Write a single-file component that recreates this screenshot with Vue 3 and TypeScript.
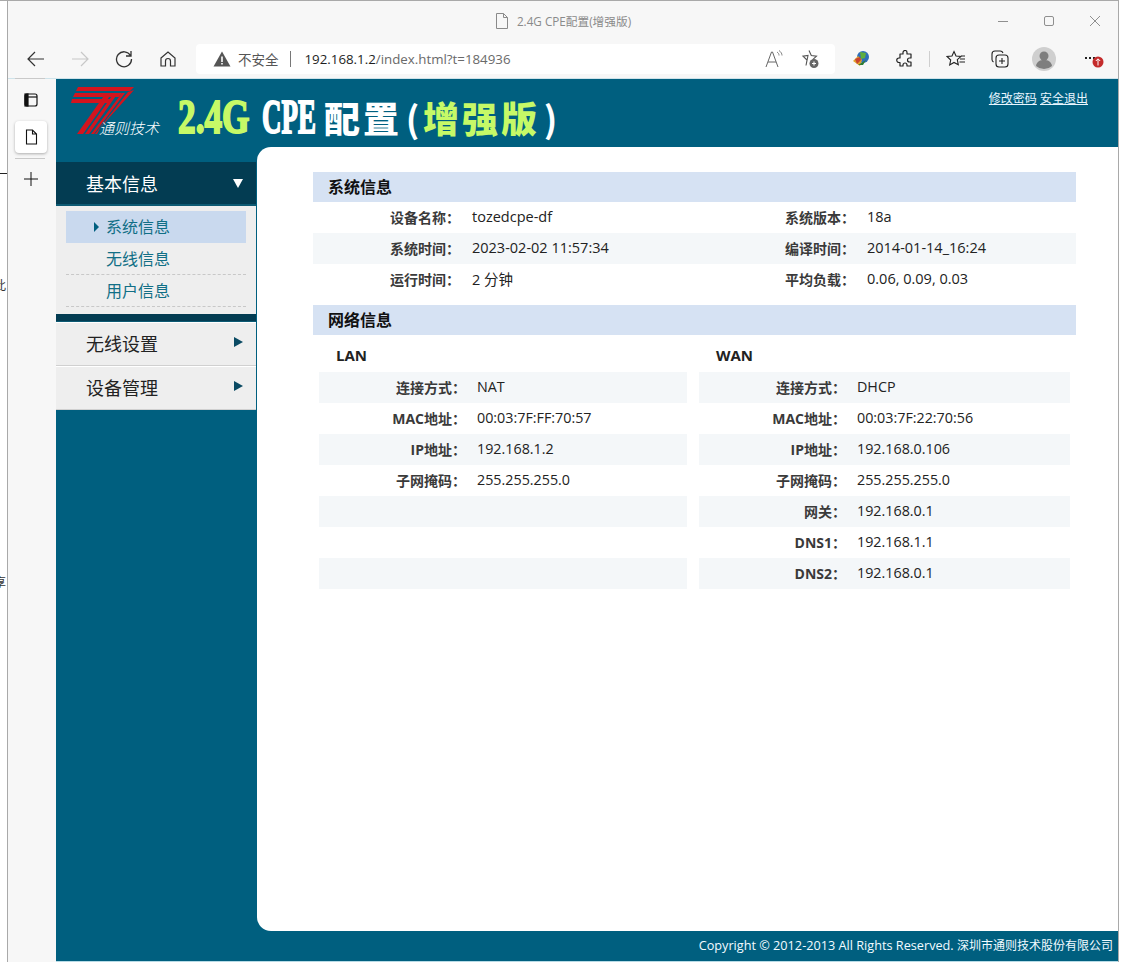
<script setup lang="ts">
interface Row { label: string; value: string; label2?: string; value2?: string }
const sysRows: Row[] = [
  { label: '设备名称：', value: 'tozedcpe-df', label2: '系统版本：', value2: '18a' },
  { label: '系统时间：', value: '2023-02-02 11:57:34', label2: '编译时间：', value2: '2014-01-14_16:24' },
  { label: '运行时间：', value: '2 分钟', label2: '平均负载：', value2: '0.06, 0.09, 0.03' },
]
const lanRows: Row[] = [
  { label: '连接方式：', value: 'NAT' },
  { label: 'MAC地址：', value: '00:03:7F:FF:70:57' },
  { label: 'IP地址：', value: '192.168.1.2' },
  { label: '子网掩码：', value: '255.255.255.0' },
  { label: '', value: '' },
  { label: '', value: '' },
  { label: '', value: '' },
]
const wanRows: Row[] = [
  { label: '连接方式：', value: 'DHCP' },
  { label: 'MAC地址：', value: '00:03:7F:22:70:56' },
  { label: 'IP地址：', value: '192.168.0.106' },
  { label: '子网掩码：', value: '255.255.255.0' },
  { label: '网关：', value: '192.168.0.1' },
  { label: 'DNS1：', value: '192.168.1.1' },
  { label: 'DNS2：', value: '192.168.0.1' },
]
</script>

<template>
  <div class="screen">
    <div class="behind">
      <i class="behind-line"></i>
      <span class="behind-a">此</span>
      <span class="behind-b">享</span>
    </div>
    <div class="window">
      <div class="titlebar">
        <div></div>
        <div class="title">
          <svg width="14" height="16" viewBox="0 0 14 16" fill="none" stroke="#8a8a8a"><path d="M1.5.5h7l4 4v11h-11zM8.5.5v4h4" /></svg>
          <span>2.4G CPE配置(增强版)</span>
        </div>
        <div class="winctl">
          <svg width="46" height="16" viewBox="0 0 46 16" stroke="#8f8f8f" fill="none"><path d="M18 8.5h10" /></svg>
          <svg width="46" height="16" viewBox="0 0 46 16" stroke="#8f8f8f" fill="none"><rect x="18.5" y="3.5" width="9" height="9" rx="1.5" /></svg>
          <svg width="46" height="16" viewBox="0 0 46 16" stroke="#8f8f8f" fill="none"><path d="M18 3l10 10M28 3L18 13" /></svg>
        </div>
      </div>
      <div class="toolbar">
        <div class="tbtn"><svg width="18" height="18" viewBox="0 0 18 18" fill="none" stroke="#333" stroke-width="1.2"><path d="M17 9H1M8 2L1 9l7 7" /></svg></div>
        <div class="tbtn"><svg width="18" height="18" viewBox="0 0 18 18" fill="none" stroke="#c8c8c8" stroke-width="1.2"><path d="M1 9h16M10 2l7 7-7 7" /></svg></div>
        <div class="tbtn"><svg width="18" height="18" viewBox="0 0 18 18" fill="none" stroke="#333" stroke-width="1.3"><path d="M15.5 5.5A7.5 7.5 0 1 0 16.5 9M16 1v5h-5" /></svg></div>
        <div class="tbtn"><svg width="18" height="18" viewBox="0 0 18 18" fill="none" stroke="#333" stroke-width="1.2"><path d="M2 8l7-6 7 6v8h-4.500v-5a2.500 2.500 0 0 0-5 0v5H2z" /></svg></div>
        <div class="address">
          <svg width="18" height="16" viewBox="0 0 18 16"><path d="M9 .5L17.500 15.500H.5z" fill="#555" /><path d="M8.200 5.500h1.600v5.500H8.200zM8.200 12h1.600v1.600H8.200z" fill="#fff" /></svg>
          <span class="insecure">不安全</span>
          <i class="addr-sep"></i>
          <span class="url"><b>192.168.1.2</b>/index.html?t=184936</span>
          <span class="addr-end">
            <svg width="20" height="20" viewBox="0 0 20 20" fill="none" stroke="#666"><path d="M2 18L7.500 3h1L14 18M4 13h8" /><path d="M13 3c1.500 1 2 2 2 3.500M15 1.500c2 1.500 3 3 3 5" stroke-width=".8" /></svg>
            <svg width="20" height="20" viewBox="0 0 20 20" fill="none" stroke="#555" stroke-width="1.1"><path d="M9 1.500l2.300 5 5.200.6-3.800 3.600M6 16.500l1-5.500-4-3.900 5-.6z" /><circle cx="14" cy="14.500" r="4.500" fill="#666" stroke="none" /><path d="M12 14.500h4M14 12.500v4" stroke="#fff" /></svg>
          </span>
        </div>
        <div class="ext">
          <div class="tbtn"><svg width="20" height="20" viewBox="0 0 20 20"><circle cx="12" cy="8" r="6" fill="#2f6fb8" /><path d="M9 3l6 1-1 5-4 1z" fill="#5fae3e" /><path d="M2 12l5-5 4 4-2 6z" fill="#e3a22c" /><path d="M4 10l5-2 1 3-4 4z" fill="#c9432f" /><path d="M7 16l8-5-3 5z" fill="#2e7d32" /></svg></div>
          <div class="tbtn"><svg width="18" height="18" viewBox="0 0 18 18" fill="none" stroke="#222" stroke-width="1.2"><path d="M7 2.500a2 2 0 0 1 4 0V4h4v4h-1.500a2 2 0 0 0 0 4H15v4h-4v-1a2 2 0 0 0-4 0v1H4v-3.500H3a2.200 2.200 0 0 1 0-4.500h1V4h3z" stroke-linejoin="round" /></svg></div>
          <i class="tsep"></i>
          <div class="tbtn"><svg width="20" height="18" viewBox="0 0 20 18" fill="none" stroke="#222" stroke-width="1.1"><path d="M8 1.500l2 4.500 5 .5-3.700 3.200 1 5L8 12.500 3.700 15l1-5L1 6.500 6 6zM14 9h5M13.500 12H19M15 6h4" /></svg></div>
          <div class="tbtn"><svg width="20" height="20" viewBox="0 0 20 20" fill="none" stroke="#222" stroke-width="1.1"><rect x="6" y="6" width="12" height="12" rx="3" /><path d="M12 9v6M9 12h6M3.500 13A3 3 0 0 1 2 10.500V5a3 3 0 0 1 3-3h5a3 3 0 0 1 3 2" /></svg></div>
          <div class="tbtn"><svg width="24" height="24" viewBox="0 0 24 24"><circle cx="12" cy="12" r="12" fill="#cfcfcf" /><circle cx="12" cy="9" r="4.500" fill="#7e7e7e" /><path d="M4 19c1-5 4-6 8-6s7 1 8 6a12 12 0 0 1-16 0z" fill="#7e7e7e" /></svg></div>
          <div class="tbtn more"><span class="dots"></span><svg class="badge" width="12" height="12" viewBox="0 0 12 12"><circle cx="6" cy="6" r="5.500" fill="#c42b2b" /><path d="M6 9.500V3M3.800 5L6 2.800 8.200 5" stroke="#fff" fill="none" /></svg></div>
        </div>
      </div>
      <div class="viewport">
        <aside class="tabs">
          <i class="tabs-line first"></i>
          <div class="tab-icon"><svg width="14" height="14" viewBox="0 0 14 14" fill="none" stroke="#111" stroke-width="1.200"><rect x="1" y="1" width="12" height="12" rx="2" /><path d="M1 4h12" /><rect x="1" y="1" width="3" height="12" fill="#111" /></svg></div>
          <div class="tab-active"><svg width="13" height="16" viewBox="0 0 13 16" fill="none" stroke="#111" stroke-width="1.100"><path d="M1.500 1h6l4 4v10h-10zM7.500 1v4h4" /></svg></div>
          <i class="tabs-line second"></i>
          <div class="tab-plus"><svg width="16" height="16" viewBox="0 0 16 16" stroke="#111"><path d="M8 1v14M1 8h14" /></svg></div>
        </aside>
        <div class="page">
          <header class="head">
            <div class="logo">
              <svg width="66" height="52" viewBox="0 0 66 52">
                <g fill="#d3141e">
                  <path d="M8 1H64L60 5H6zM5 7H52L49 11H3zM2 13H42L40 17H1z" />
                  <path d="M36 7h6L13 48H7zM44 7h4L19 48h-4zM52 7h3L24 48h-3z" />
                  <path d="M58 6l6-2L30 42l-3 6h-2z" />
                </g>
              </svg>
              <span class="logo-text">通则技术</span>
            </div>
            <div class="bigtitle">
              <span class="latin green w73"><span>2.4G</span></span>
              <span class="latin white w58"><span>CPE</span></span>
              <span class="cjk white">配置</span>
              <span class="paren white">(</span>
              <span class="cjk green">增强版</span>
              <span class="paren white">)</span>
            </div>
            <nav class="toplinks"><a>修改密码</a> <a>安全退出</a></nav>
          </header>
          <div class="body">
            <div class="menu">
              <div class="m-open"><span>基本信息</span><i class="tri-down"></i></div>
              <div class="m-sub">
                <div class="sub sel"><i class="tri-small"></i>系统信息</div>
                <div class="sub">无线信息</div>
                <div class="sub">用户信息</div>
              </div>
              <div class="m-bar"></div>
              <div class="m-item"><span>无线设置</span><i class="tri-right"></i></div>
              <div class="m-item"><span>设备管理</span><i class="tri-right"></i></div>
            </div>
            <main class="card">
              <h2 class="sec">系统信息</h2>
              <div v-for="r in sysRows" :key="r.label" class="sys-row">
                <span class="k">{{ r.label }}</span><span class="v">{{ r.value }}</span>
                <span class="k">{{ r.label2 }}</span><span class="v">{{ r.value2 }}</span>
              </div>
              <h2 class="sec sec2">网络信息</h2>
              <div class="net">
                <div class="net-col">
                  <h3>LAN</h3>
                  <div v-for="(r, i) in lanRows" :key="i" class="net-row"><span class="k">{{ r.label }}</span><span class="v nv">{{ r.value }}</span></div>
                </div>
                <div class="net-col">
                  <h3>WAN</h3>
                  <div v-for="(r, i) in wanRows" :key="i" class="net-row"><span class="k">{{ r.label }}</span><span class="v nv">{{ r.value }}</span></div>
                </div>
              </div>
            </main>
          </div>
          <footer class="foot">Copyright © 2012-2013 All Rights Reserved. <span class="foot-cn">深圳市通则技术股份有限公司</span></footer>
        </div>
      </div>
    </div>
  </div>
</template>

<style>
html, body { margin: 0; background: #fff; }
</style>

<style scoped>
* { box-sizing: border-box; }
.screen {
  width: 1126px; height: 969px; display: flex; overflow: hidden; background: #fff;
  font-family: "Open Sans", "Noto Sans CJK SC", sans-serif; color: #222;
}
.behind { width: 7px; position: relative; overflow: hidden; flex: none; border-top: 1px solid #a9a9a9; font-size: 12px; color: #333; }
.behind-line { position: absolute; left: 0; top: 172px; width: 7px; height: 1px; background: #222; }
.behind-a { position: absolute; left: -6px; top: 275px; }
.behind-b { position: absolute; left: -6px; top: 572px; }
.window { width: 1112px; height: 962px; flex: none; border: 1px solid #a9a9a9; border-bottom: 0; display: flex; flex-direction: column; background: #f7f7f7; }
.titlebar { height: 39px; display: grid; grid-template-columns: 1fr auto 1fr; align-items: center; flex: none; }
.title { display: flex; align-items: center; gap: 8px; font-size: 11.7px; color: #8a8a8a; }
.winctl { display: flex; justify-content: flex-end; align-items: center; }
.toolbar { height: 39px; display: flex; align-items: center; padding-left: 6px; flex: none; border-bottom: 1px solid #cfe3ea; }
.tbtn { width: 44px; height: 30px; display: flex; align-items: center; justify-content: center; flex: none; }
.address { width: 639px; height: 30px; margin-left: 6px; background: #fff; border-radius: 4px; display: flex; align-items: center; padding-left: 17px; font-size: 13.3px; flex: none; }
.insecure { margin-left: 7px; color: #555; font-size: 13.5px; }
.addr-sep { width: 1px; height: 16px; background: #777; margin: 0 14px 0 11px; }
.url { color: #6a6a6a; font-size: 13.3px; }
.url b { font-weight: 400; color: #1e1e1e; }
.addr-end { margin-left: auto; display: flex; gap: 16px; padding-right: 15px; align-items: center; }
.ext { display: flex; align-items: center; margin-left: 4px; }
.tsep { width: 1px; height: 16px; background: #cfcfcf; margin: 0 4px 0 2px; flex: none; }
.more { position: relative; margin-left: 2px; }
.dots { width: 2px; height: 2px; background: #222; box-shadow: -4px 0 #222, 4px 0 #222; margin-top: -3px; }
.badge { position: absolute; left: 24px; top: 12px; }
.viewport { flex: 1; display: flex; min-height: 0; }
.tabs { width: 48px; flex: none; display: flex; flex-direction: column; align-items: flex-start; padding-left: 7px; }
.tabs-line { display: block; width: 30px; height: 1px; background: #c9c9c9; flex: none; }
.tabs-line.first { margin-top: -1px; }
.tabs-line.second { margin-top: 5px; }
.tab-icon { width: 32px; height: 42px; display: flex; align-items: center; justify-content: center; flex: none; }
.tab-active { width: 32px; height: 32px; background: #fff; border-radius: 4px; box-shadow: 0 1px 3px rgba(0,0,0,.3); display: flex; align-items: center; justify-content: center; flex: none; }
.tab-plus { width: 32px; height: 40px; display: flex; align-items: center; justify-content: center; flex: none; }
.page { flex: 1; display: flex; flex-direction: column; background: #005f7f; min-width: 0; }
.head { height: 68px; display: flex; flex: none; align-items: flex-start; }
.logo { width: 110px; height: 68px; position: relative; margin-left: 12px; flex: none; }
.logo svg { position: absolute; left: 2px; top: 7px; }
.logo-text { position: absolute; left: 31px; top: 38px; color: #fff; font-size: 15px; font-style: italic; font-weight: 300; white-space: nowrap; }
.bigtitle { display: flex; align-items: center; height: 76px; flex: none; }
.latin { display: inline-block; font-family: "Liberation Serif", serif; font-weight: 700; font-size: 49px; line-height: 76px; white-space: nowrap; -webkit-text-stroke: 2px currentColor; }
.latin span { display: inline-block; transform-origin: 0 50%; }
.w73 { width: 84px; }
.w73 span { transform: scaleX(.72); }
.w58 { width: 62px; }
.w58 span { transform: scaleX(.55); }
.green { color: #c6f967; }
.white { color: #fff; }
.cjk { font-family: "Noto Sans CJK SC", sans-serif; font-weight: 900; font-size: 36px; letter-spacing: 3px; line-height: 76px; }
.paren { font-family: "Noto Sans CJK SC", sans-serif; font-weight: 700; font-size: 36px; line-height: 76px; width: 21px; text-align: center; }
.toplinks { margin-left: auto; margin-right: 30px; margin-top: 10px; font-size: 12px; color: #e9f6ff; white-space: nowrap; }
.toplinks a { text-decoration: underline; }
.body { flex: 1; display: flex; min-height: 0; }
.menu { width: 200px; flex: none; margin-top: 15px; margin-right: 1px; }
.m-open { height: 44px; background: #033c52; border-bottom: 2px solid #0d5a73; color: #fff; display: flex; align-items: center; justify-content: space-between; padding: 0 13px 0 30px; font-size: 18px; }
.m-sub { background: #eeeeee; height: 108px; padding: 5px 10px 0; }
.sub { height: 32px; padding: 0 0 2px 40px; font-size: 16px; color: #116f86; display: flex; align-items: center; border-bottom: 1px dashed #c8c8c8; position: relative; }
.sub.sel { background: #c9d9ee; border-bottom: 0; }
.tri-small { position: absolute; left: 28px; top: 11px; border-left: 5px solid #005f7f; border-top: 5px solid transparent; border-bottom: 5px solid transparent; }
.m-bar { height: 8px; background: #033c52; border-bottom: 1px solid #0d5a73; }
.m-item { height: 44px; background: #eee; border-bottom: 1px solid #d0d0d0; border-top: 1px solid #fff; color: #222; display: flex; align-items: center; justify-content: space-between; padding: 0 13px 2px 30px; font-size: 18px; }
.tri-down { border-top: 9px solid #fff; border-left: 5px solid transparent; border-right: 5px solid transparent; }
.tri-right { border-left: 9px solid #0a4a63; border-top: 5px solid transparent; border-bottom: 5px solid transparent; margin-bottom: 3px; }
.card { flex: 1; background: #fff; border-radius: 14px 0 0 14px; padding: 25px 42px 0 56px; min-width: 0; }
.sec { margin: 0; height: 30px; background: #d6e2f3; font-size: 16px; font-weight: 700; padding-left: 15px; line-height: 30px; color: #111; }
.sec2 { margin-top: 10px; }
.sys-row { height: 31px; padding-bottom: 2px; display: grid; grid-template-columns: 147px 315px 80px 1fr; align-items: center; }
.sys-row:nth-of-type(even) { background: #f4f7f9; }
.k { text-align: right; font-size: 14px; font-weight: 700; color: #3a3a3a; white-space: nowrap; }
.v { padding-left: 12px; font-size: 14.5px; color: #222; white-space: nowrap; }
.nv { padding-left: 11px; font-size: 14.3px; }
.net { display: grid; grid-template-columns: 368px 371px; column-gap: 12px; padding-left: 6px; }
.net-col h3 { margin: 0; height: 37px; padding-left: 17px; font-size: 15px; font-weight: 700; line-height: 41px; color: #222; }
.net-row { height: 31px; padding-bottom: 2px; display: grid; grid-template-columns: 147px 1fr; align-items: center; }
.net-row:nth-of-type(odd) { background: #f4f7f9; }
.foot { height: 31px; flex: none; background: #005f7f; border-bottom: 1px solid #b7dbe6; color: #f2fbff; font-size: 12.7px; text-align: right; padding-right: 5px; line-height: 28px; white-space: nowrap; }
.foot-cn { font-size: 12px; }
</style>
